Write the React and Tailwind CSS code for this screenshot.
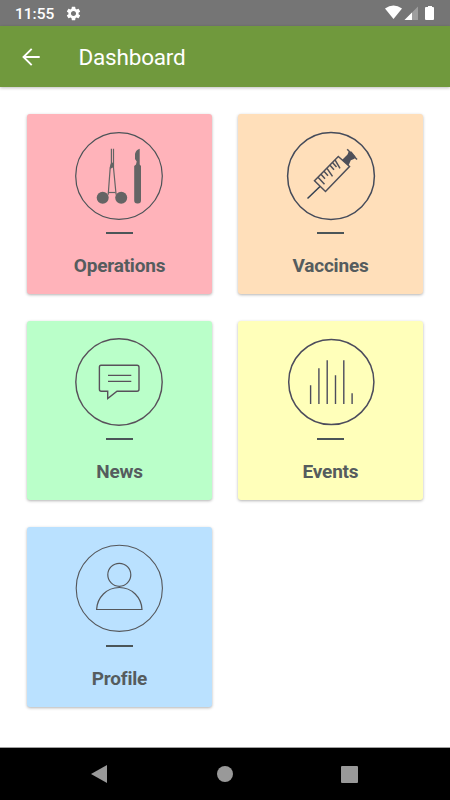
import { MdSettings } from "react-icons/md";

const OperationsIcon = () => (
    <svg viewBox="-1 0 101 100" className="w-[101px] h-[100px]" fill="none" stroke="#4b5357">
        <circle cx="49" cy="51" r="43.3" strokeWidth="1.2" />
        <g stroke="#646464" strokeWidth="1.2">
            <path d="M41.400 23.700v15l-1.200 4-2 27M43.500 23.700v19l2.600 27" />
            <path d="M39 67.500h6.500" />
        </g>
        <path d="M40.800 38.500l3-1.500v5l-3.700 2z" fill="#646464" stroke="none" />
        <circle cx="32.700" cy="72.700" r="6" fill="#646464" stroke="none" />
        <circle cx="51.200" cy="72.700" r="6" fill="#646464" stroke="none" />
        <path d="M69.700 23.700v15.800l1.300 1.500v34.500q0 3-3 3h-.8q-3 0-3-3V41l1.800-1.500.7-3-1.700-2.500v-5q1-4.500 4.700-5.300z" fill="#646464" stroke="none" />
    </svg>
);

const VaccinesIcon = () => (
    <svg viewBox="0 0 101 100" className="w-[101px] h-[100px]" fill="none" stroke="#4e4f59">
        <circle cx="51" cy="51" r="43.4" strokeWidth="1.5" stroke="#454b5a" />
        <g strokeWidth="1.5">
            <path d="M58.300 31.500L69.500 41.500 45.500 66.500 34.500 55.800z" />
            <path d="M27.500 73.500L40 61.500" stroke="#334052" />
            <path d="M38 52.300l6.500 7M41 49.300l4 4.500M44 46.300l4 4.500M47 43.300l5.500 8M50 40.300l4 4.500M52.500 37.600l4 4.500M55 34.800l5 8.500" />
            <path d="M67.200 24.200L77 34.500" />
        </g>
        <path d="M62 35L67.500 29.500 68.500 27 71.500 26.500 75.500 31.500 74.500 33.800 70.800 35.300 68.500 40.500z" fill="#4e4f59" stroke="none" />
    </svg>
);

const NewsIcon = () => (
    <svg viewBox="-1 1 101 100" className="w-[101px] h-[100px]" fill="none" stroke="#58505a">
        <circle cx="49" cy="52" r="43.200" strokeWidth="1.400" />
        <path d="M31 35.300h36q2 0 2 2v22q0 2-2 2H47L37.700 68.500v-7.200H31.200q-1.800 0-1.800-2v-22q0-2 1.600-2z" strokeWidth="1.400" />
        <path d="M38 45.300h23.300M38 51.300h23.300" strokeWidth="1.200" />
    </svg>
);

const EventsIcon = () => (
    <svg viewBox="0 1 101 100" className="w-[101px] h-[100px]" fill="none" stroke="#4c4c5c">
        <circle cx="51.300" cy="52" r="42.600" strokeWidth="1.500" />
        <path d="M30.600 55.300V74M38.900 38.300V74M47.200 30.300V74M55.500 45.300V74M63.800 30.300V74M72.100 63.300V74" strokeWidth="1.400" />
    </svg>
);

const ProfileIcon = () => (
    <svg viewBox="-1 -2 101 100" className="w-[101px] h-[100px]" fill="none" stroke="#55575b">
        <circle cx="49.300" cy="48.300" r="43.100" strokeWidth="1.100" />
        <circle cx="49.300" cy="34.800" r="11.500" strokeWidth="1.200" />
        <path d="M26.600 69.500h45.400C71.500 57.500 62 47.500 49.300 47.500S27.200 57.500 26.600 69.500z" strokeWidth="1.200" />
    </svg>
);

const items = [
    { title: "Operations", color: "bg-[#ffb3ba]", Icon: OperationsIcon },
    { title: "Vaccines", color: "bg-[#ffdfba]", Icon: VaccinesIcon },
    { title: "News", color: "bg-[#baffc9]", Icon: NewsIcon },
    { title: "Events", color: "bg-[#ffffba]", Icon: EventsIcon },
    { title: "Profile", color: "bg-[#bae1ff]", Icon: ProfileIcon },
];

function Card({ title, color, Icon }) {
    return (
        <button
            className={`${color} flex flex-col items-center h-[179.500px] pt-[10.400px] rounded-[3px] shadow-[0_1px_3px_rgba(0,0,0,0.3)]`}
        >
            <Icon />
            <span className="w-[27.500px] h-[2px] mt-[7px] bg-[#4b5558]" />
            <span className="mt-[20px] text-[19px] tracking-[-0.2px] leading-6 font-bold text-[#555c5e]">{title}</span>
        </button>
    );
}

export default function App() {
    return (
        <div className="w-[450px] h-[800px] flex flex-col bg-white font-[Roboto,sans-serif] overflow-hidden">
            <div className="h-[26px] shrink-0 flex items-center bg-[#757575] text-white pl-[15px] pr-[15px]">
                <span className="text-[15.500px] font-medium leading-none pt-[3px]">11:55</span>
                <MdSettings className="ml-[11px] size-[17px]" />
                <svg viewBox="0 0 50 16" className="ml-auto w-[50px] h-4" fill="#fff">
                    <path d="M0 3.500Q8.500-2.500 17 3.500L8.500 14z" />
                    <path d="M33 1.500V15H19.500z" opacity=".3" />
                    <path d="M27 7.500V15h-7.500z" />
                    <path d="M43 1h4v1h1q1 0 1 1v11q0 1-1 1h-7q-1 0-1-1V3q0-1 1-1h2z" />
                </svg>
            </div>

            <header className="h-[61px] shrink-0 flex items-center bg-[#70993d] text-white pl-[22px] shadow-[0_1px_3px_rgba(0,0,0,0.25)]">
                <svg viewBox="0 0 18 18" className="w-[18px] h-[18px]" fill="none" stroke="#fff" strokeWidth="1.900">
                    <path d="M17.700 9H1.500M9.700.8L1.500 9l8.200 8.200" />
                </svg>
                <h1 className="ml-[38.500px] pt-[1px] text-[22.500px] tracking-[-0.2px] leading-none">Dashboard</h1>
            </header>

            <main className="flex-1 grid grid-cols-[185px_185px] content-start gap-x-[26px] gap-y-[27px] pl-[27px] pt-[27.400px]">
                {items.map((item) => (
                    <Card key={item.title} {...item} />
                ))}
            </main>

            <nav className="h-[53px] shrink-0 bg-black border-t border-[#a0a0a0] flex items-center justify-between pl-[91px] pr-[92px]">
                <svg viewBox="0 0 16 18" className="w-4 h-[18px]" fill="#999">
                    <path d="M16 0v18L0 9z" />
                </svg>
                <span className="size-4 ml-px rounded-full bg-[#999]" />
                <span className="size-[17px] rounded-[1px] bg-[#999]" />
            </nav>
        </div>
    );
}
